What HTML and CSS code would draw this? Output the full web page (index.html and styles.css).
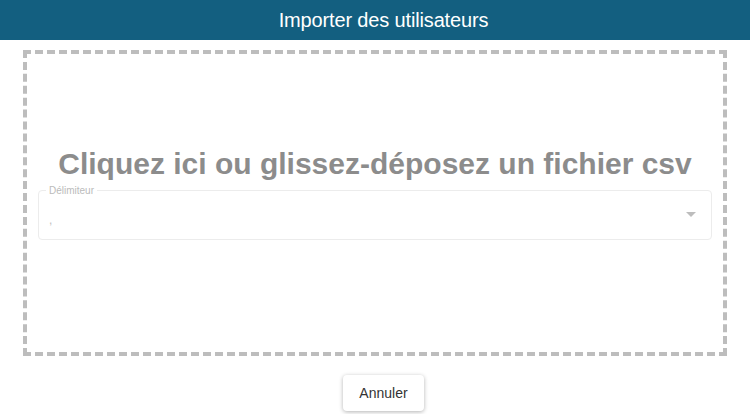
FILE: index.html
```html
<!DOCTYPE html>
<html lang="fr">
<head>
<meta charset="utf-8">
<title>Importer des utilisateurs</title>
<link rel="stylesheet" href="styles.css">
</head>
<body>
<header class="title-bar">Importer des utilisateurs</header>
<main class="content">
  <div class="dropzone">
    <div class="drop-text">Cliquez ici ou glissez-déposez un fichier csv</div>
    <div class="field">
      <span class="field-label">Délimiteur</span>
      <span class="field-value">,</span>
      <svg class="arrow" width="10" height="5" viewBox="0 0 10 5"><path d="M0 0 L10 0 L5 5 Z" fill="#bdbdbd"/></svg>
    </div>
  </div>
  <div class="actions">
    <button class="btn">Annuler</button>
  </div>
</main>
</body>
</html>
```
FILE: styles.css
```css
* { box-sizing: border-box; }
html, body { margin: 0; padding: 0; background: #fff; }
body { font-family: "Liberation Sans", Arial, sans-serif; width: 750px; height: 414px; overflow: hidden; }
.title-bar {
  height: 40px;
  background: #135f80;
  color: #fff;
  font-size: 20px;
  letter-spacing: -0.15px;
  display: flex;
  align-items: center;
  justify-content: center;
  padding-left: 17px;
}
.content { padding: 10px 23px 0 23px; }
.dropzone {
  height: 306px;
  border: 4px dashed #bdbdbd;
  display: flex;
  flex-direction: column;
  align-items: center;
  padding: 93px 11px 0 11px;
}
.drop-text {
  font-size: 30px;
  font-weight: bold;
  color: #8c8c8c;
  line-height: 34px;
}
.field {
  position: relative;
  align-self: stretch;
  margin-top: 9px;
  height: 50px;
  border: 1px solid #ececec;
  border-radius: 4px;
}
.field-label {
  position: absolute;
  top: -6px;
  left: 7px;
  padding: 0 3px;
  background: #fff;
  font-size: 10px;
  line-height: 12px;
  color: #bbbbbb;
}
.field-value {
  position: absolute;
  left: 10px;
  top: 22px;
  font-size: 12px;
  color: #c0c0c0;
}
.arrow { position: absolute; right: 15px; top: 21px; }
.actions { display: flex; justify-content: center; padding-top: 19px; }
.btn {
  font-family: "Liberation Sans", Arial, sans-serif;
  margin-left: 17px;
  width: 81px;
  height: 36px;
  border: none;
  border-radius: 4px;
  background: #fff;
  color: #333;
  font-size: 14px;
  box-shadow: 0 1px 4px rgba(0,0,0,0.3);
}
```
